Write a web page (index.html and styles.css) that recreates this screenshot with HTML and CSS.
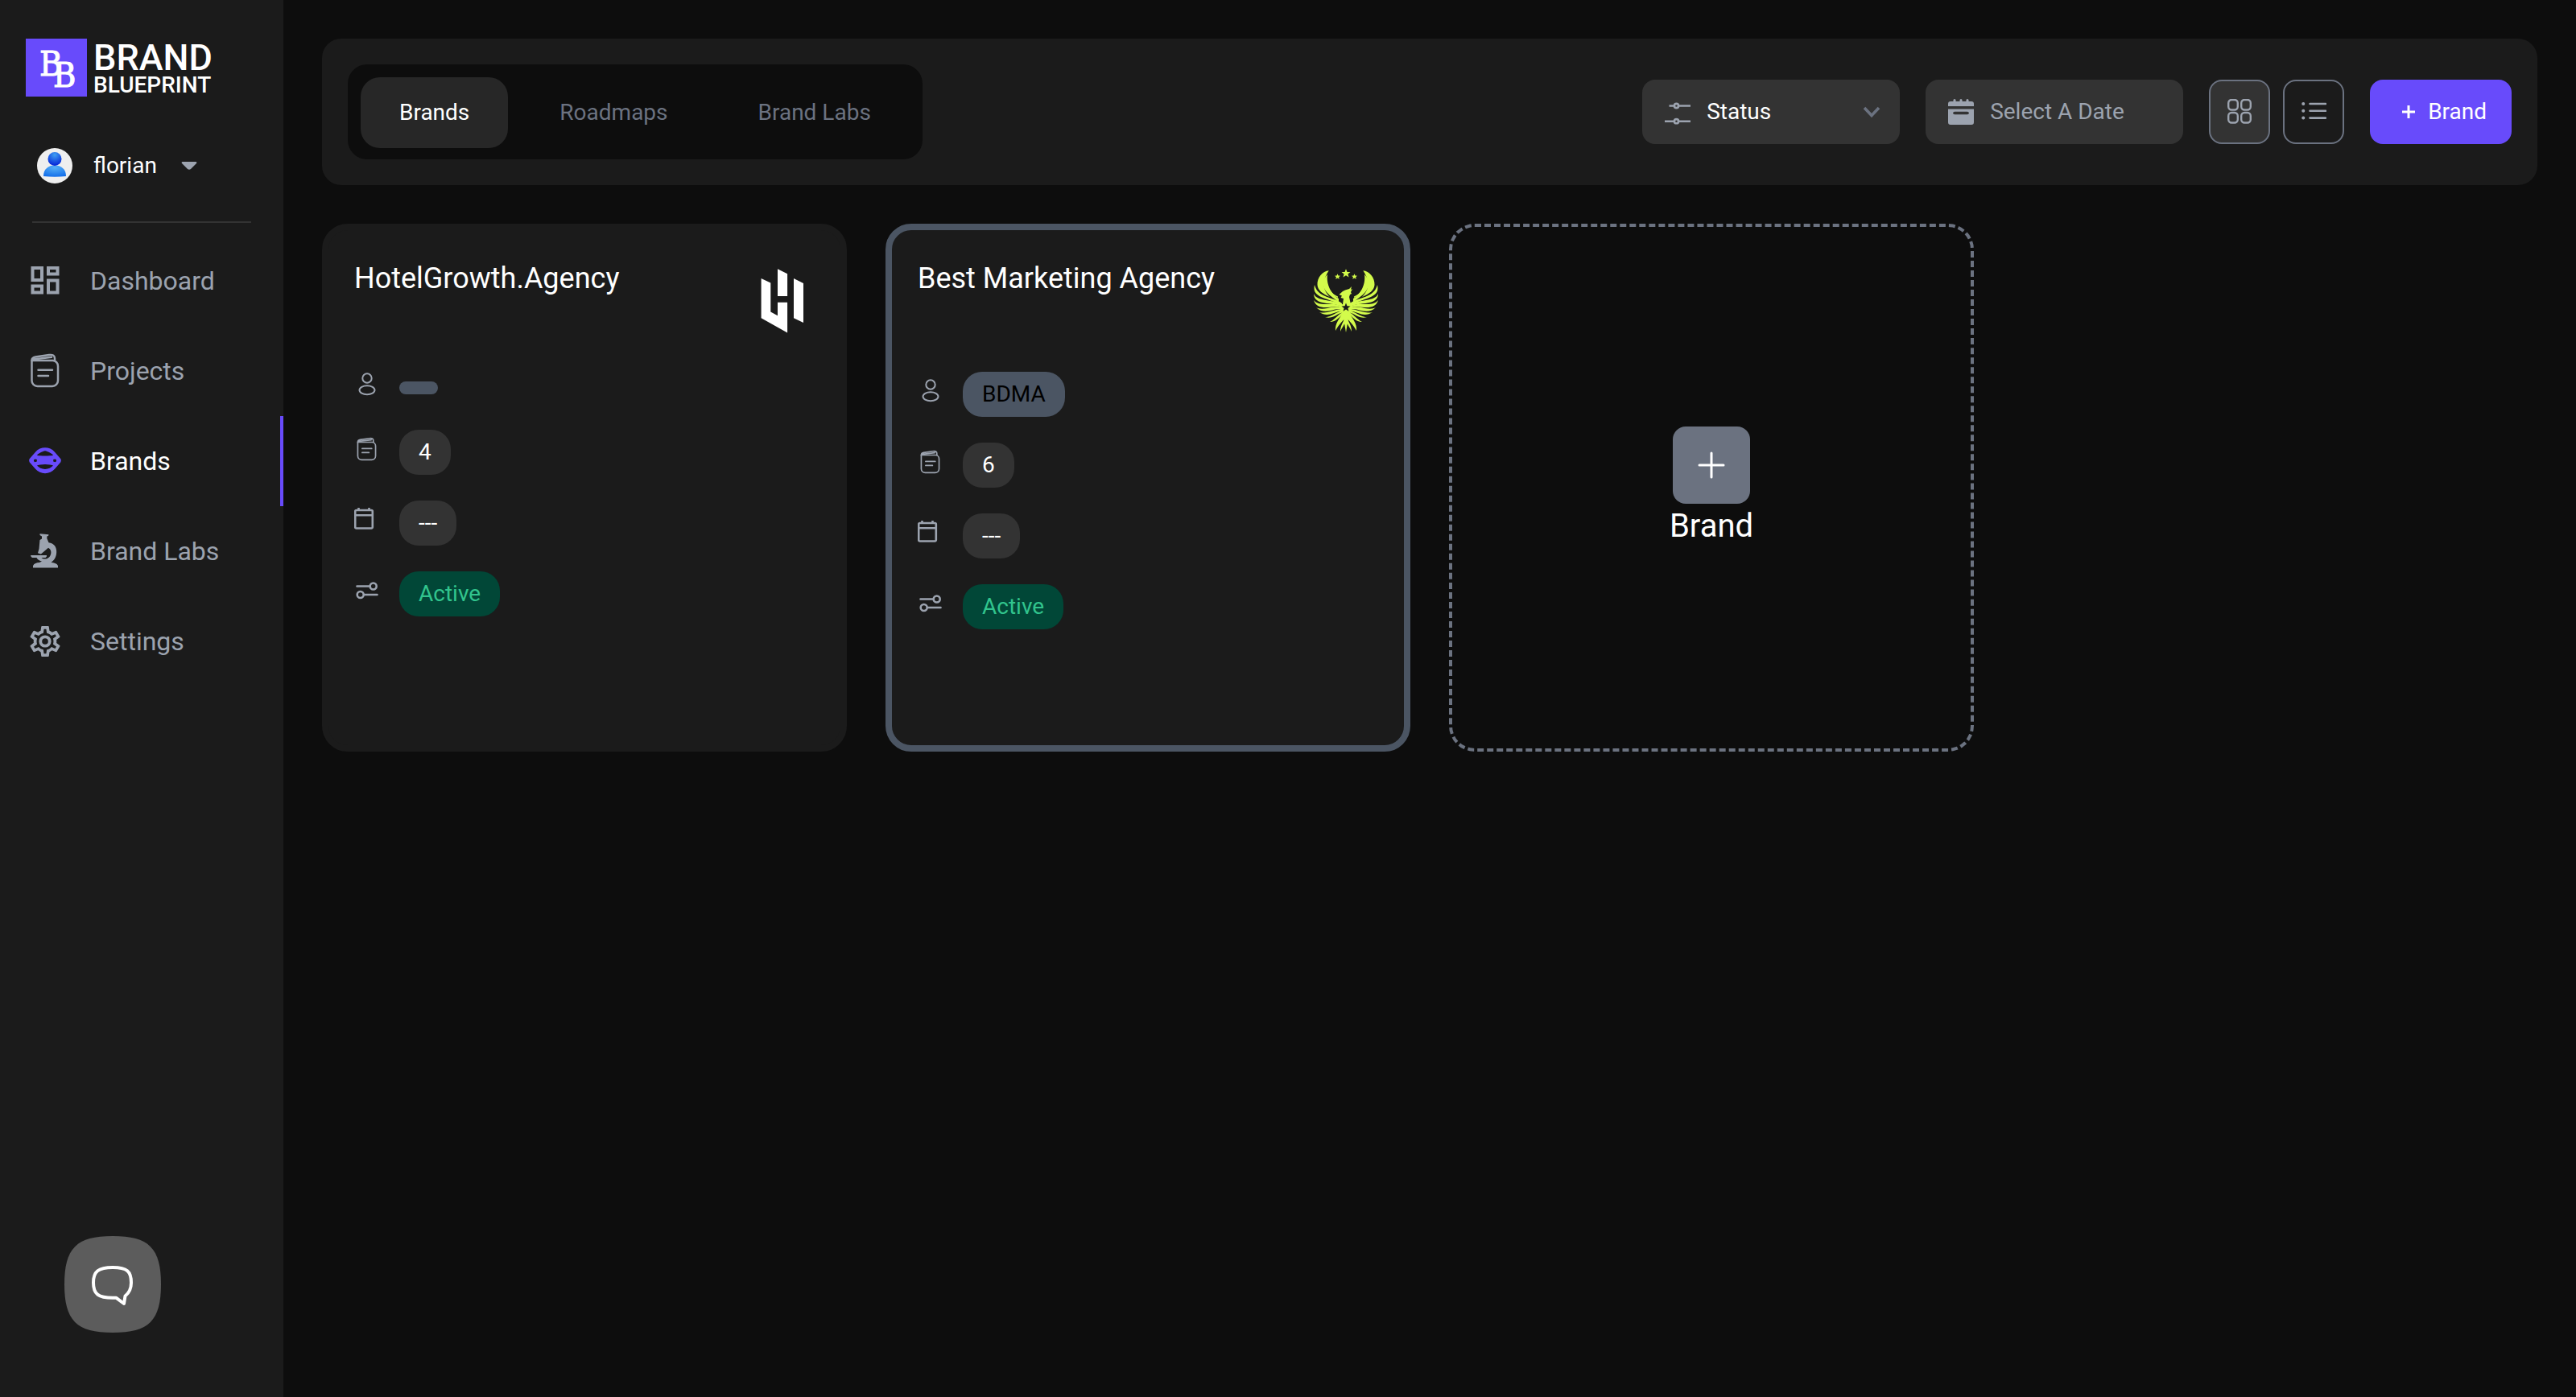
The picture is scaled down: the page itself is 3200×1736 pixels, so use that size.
FILE: index.html
```html
<!DOCTYPE html>
<html lang="en">
<head>
<meta charset="utf-8">
<title>Brands - Brand Blueprint</title>
<meta name="viewport" content="width=device-width, initial-scale=1">
<link rel="stylesheet" href="styles.css">
</head>
<body>
<svg class="sprite" aria-hidden="true">
  <symbol id="i-projects" viewBox="0 0 40 44">
    <g fill="none" stroke="currentColor" stroke-width="2.500" stroke-linecap="round" stroke-linejoin="round">
      <path d="M3.500 9H29.500a7 7 0 0 1 6.500 7V34a7 7 0 0 1-7 7H10.500a7 7 0 0 1-7-7Z"/>
      <path d="M3.500 9C3.500 6.500 5 5 8 4.500L25 2C30 1.400 32 3 32 6.500V9M6 7.500L28 4.800"/>
      <path d="M11.500 20.700H29M11.500 28H24"/>
    </g>
  </symbol>
  <symbol id="i-user" viewBox="0 0 32 32">
    <g fill="none" stroke="currentColor" stroke-width="2"><circle cx="16" cy="8" r="5.700"/><ellipse cx="16" cy="22.700" rx="9.500" ry="5.500"/></g>
  </symbol>
  <symbol id="i-calendar" viewBox="0 0 32 32">
    <path fill="none" stroke="currentColor" stroke-width="2.600" stroke-linejoin="round" d="M1.200 5.500a1.500 1.500 0 0 1 1.500-1.500H21.300a1.500 1.500 0 0 1 1.500 1.500V25a1.500 1.500 0 0 1-1.500 1.500H2.700A1.500 1.500 0 0 1 1.200 25ZM1.200 10.300H22.800M5.500 4V1M18.500 4V1"/>
  </symbol>
  <symbol id="i-toggles" viewBox="0 0 32 32">
    <g fill="none" stroke="currentColor" stroke-width="2.600" stroke-linecap="round"><path d="M3.500 10.500H19M12.500 21H28.500"/><circle cx="23.700" cy="10.500" r="4"/><circle cx="7.700" cy="21" r="4"/></g>
  </symbol>
</svg>

<div class="app">
  <aside class="sidebar">
    <a class="logo" href="#" aria-label="Brand Blueprint">
      <svg class="logo-mark" viewBox="0 0 76 72" aria-hidden="true">
        <rect width="76" height="72" fill="#684bfb"/>
        <text class="monogram" x="17" y="46">B</text>
        <text class="monogram" x="34" y="60">B</text>
      </svg>
      <span class="logo-text"><span class="logo-top">BRAND</span><span class="logo-bottom">BLUEPRINT</span></span>
    </a>
    <button class="user" type="button">
      <svg class="avatar" viewBox="0 0 44 44" aria-hidden="true">
        <defs>
          <radialGradient id="head" cx=".5" cy=".2" r=".8"><stop offset="0" stop-color="#3f9ff2"/><stop offset="1" stop-color="#0322d6"/></radialGradient>
          <radialGradient id="torso" cx=".5" cy=".2" r=".8"><stop offset="0" stop-color="#56b0f7"/><stop offset="1" stop-color="#1570ea"/></radialGradient>
        </defs>
        <circle cx="22" cy="22" r="22" fill="#efefef"/>
        <path d="M8 35C8 26 14 21.500 22 21.500S36 26 36 35Q22 36.500 8 35Z" fill="url(#torso)"/>
        <circle cx="22" cy="13.500" r="8.500" fill="url(#head)"/>
      </svg>
      <span class="user-name">florian</span>
      <svg class="caret" viewBox="0 0 20 10" aria-hidden="true"><path d="M1.500 0H18.500Q20 .5 19 2L12 9Q10 10.500 8 9L1 2Q0 .5 1.500 0Z" fill="#9ca3af"/></svg>
    </button>
    <hr class="divider">
    <nav class="nav" aria-label="Main">
      <a class="nav-item" href="#"><svg class="nav-icon" viewBox="0 -2 40 44" aria-hidden="true"><g fill="none" stroke="currentColor" stroke-width="4"><path d="M4.500 4H16V19H4.500ZM24 4H35.500V11.500H24ZM4.500 26.500H16V34.500H4.500ZM24 19.500H35.500V34.500H24Z"/></g></svg>Dashboard</a>
      <a class="nav-item" href="#"><svg class="nav-icon" aria-hidden="true"><use href="#i-projects"/></svg>Projects</a>
      <a class="nav-item nav-item-active" href="#" aria-current="page"><svg class="nav-icon" viewBox="0 -1 40 44" aria-hidden="true"><path fill="#684bfb" fill-rule="evenodd" d="M.6 18.300L8 9.800C14 2.500 26 2.500 32 9.800L39.400 18.300Q40.600 20.300 39.400 22.300L32 30.800C26 38 14 38 8 30.800L.6 22.300Q-.6 20.300 .6 18.300ZM10 13.600Q12 11 17.500 9Q20 7.400 22.500 9Q28 11 30 13.600Q29.500 14.600 26 14.200Q20 15 14 14.200Q10.500 14.600 10 13.600ZM10 26.600Q10.500 25.600 14 25.400Q20 24.600 26 25.400Q29.500 25.600 30 26.600Q26.500 30.700 20 30.900Q13.500 30.700 10 26.600ZM6 19.500L7.500 18.500L9.800 19V21.500L7.500 22.300L6 21.300ZM34 19.500L32.500 18.500L30.200 19V21.500L32.500 22.300L34 21.300Z"/></svg>Brands</a>
      <a class="nav-item" href="#"><svg class="nav-icon" viewBox="0 0 40 44" aria-hidden="true"><path fill="currentColor" d="M13.500 .3L24.500 1.300L24 3L22.500 3.300L22.300 6L24.500 11.300C31 12 34.500 17 34.200 23C34 29 31.500 33 27.500 36C31 36 34.500 37 36 40V42.500H5V40C6.500 37 9.500 36 13 36L16 34.500C12.500 33.500 10.500 32 9.500 30H4Q2.200 29 2 27H22Q22.500 29 20.500 30H15.500C18 32.500 23 32 25.500 29C28.500 25 28 20 24 17.800L15.500 25L14.500 25.500L11 24.200L12.500 19L13.500 8L16 6.500V3.500L13.500 2Z"/></svg>Brand Labs</a>
      <a class="nav-item" href="#"><svg class="nav-icon" viewBox="1.500 1.500 21 21" aria-hidden="true"><path fill="currentColor" d="M12 8A4 4 0 0 1 16 12A4 4 0 0 1 12 16A4 4 0 0 1 8 12A4 4 0 0 1 12 8M12 10A2 2 0 0 0 10 12A2 2 0 0 0 12 14A2 2 0 0 0 14 12A2 2 0 0 0 12 10M10 22C9.750 22 9.540 21.820 9.500 21.580L9.130 18.930C8.500 18.680 7.960 18.340 7.440 17.940L4.950 18.950C4.730 19.030 4.460 18.950 4.340 18.730L2.340 15.270C2.210 15.050 2.270 14.780 2.460 14.630L4.570 12.970L4.500 12L4.570 11L2.460 9.370C2.270 9.220 2.210 8.950 2.340 8.730L4.340 5.270C4.460 5.050 4.730 4.960 4.950 5.050L7.440 6.050C7.960 5.660 8.500 5.320 9.130 5.070L9.500 2.420C9.540 2.180 9.750 2 10 2H14C14.250 2 14.460 2.180 14.500 2.420L14.870 5.070C15.500 5.320 16.040 5.660 16.560 6.050L19.050 5.050C19.270 4.960 19.540 5.050 19.660 5.270L21.660 8.730C21.790 8.950 21.730 9.220 21.540 9.370L19.430 11L19.500 12L19.430 13L21.540 14.630C21.730 14.780 21.790 15.050 21.660 15.270L19.660 18.730C19.540 18.950 19.270 19.040 19.050 18.950L16.560 17.950C16.040 18.340 15.500 18.680 14.870 18.930L14.500 21.580C14.460 21.820 14.250 22 14 22H10M11.250 4L10.880 6.610C9.680 6.860 8.620 7.500 7.850 8.390L5.440 7.350L4.690 8.650L6.800 10.200C6.400 11.370 6.400 12.640 6.800 13.800L4.680 15.360L5.430 16.660L7.860 15.620C8.630 16.500 9.680 17.140 10.870 17.380L11.240 20H12.760L13.130 17.390C14.320 17.140 15.370 16.500 16.140 15.620L18.570 16.660L19.320 15.360L17.200 13.810C17.600 12.640 17.600 11.370 17.200 10.200L19.310 8.650L18.560 7.350L16.150 8.390C15.380 7.500 14.320 6.860 13.120 6.620L12.750 4H11.250Z"/></svg>Settings</a>
    </nav>
    <button class="chat" type="button" aria-label="Open chat">
      <svg viewBox="0 0 120 120" aria-hidden="true">
        <path d="M60 0C105 0 120 15 120 60S105 120 60 120S0 105 0 60S15 0 60 0Z" fill="#5c5c5c"/>
        <path d="M60 39C78 39 83 44 83 58C83 66 80.500 70.500 75.500 74.500L74 84L64.500 76.800H60C42 76.800 36 72 36 58S42 39 60 39Z" fill="none" stroke="#fff" stroke-width="4" stroke-linejoin="round"/>
      </svg>
    </button>
  </aside>

  <main class="main">
    <header class="toolbar">
      <div class="tabs" role="tablist">
        <button class="tab tab-active" type="button" role="tab" aria-selected="true">Brands</button>
        <button class="tab" type="button" role="tab" aria-selected="false">Roadmaps</button>
        <button class="tab" type="button" role="tab" aria-selected="false">Brand Labs</button>
      </div>
      <div class="controls">
        <label class="field">
          <svg class="field-icon" viewBox="0 0 32 32" aria-hidden="true"><g fill="none" stroke="#9ca3af" stroke-width="2.600"><path d="M5.500 8.500H11M18 8.500H32M0 27.700H11M18 27.700H32"/><circle cx="14.500" cy="8.500" r="2.600"/><circle cx="14.500" cy="27.700" r="2.600"/></g></svg>
          <select class="field-control" aria-label="Status"><option>Status</option></select>
          <svg class="chevron" viewBox="0 0 22 14" aria-hidden="true"><path d="M2 2L11 11.500L20 2" fill="none" stroke="#6b7280" stroke-width="3.600"/></svg>
        </label>
        <label class="field">
          <svg class="field-icon" viewBox="0 0 32 32" aria-hidden="true"><path fill="#9ca3af" fill-rule="evenodd" d="M0 6Q0 3 3 3H6.500V1Q8 -1 9.500 1V3H14.500V1Q16 -1 17.500 1V3H22.500V1Q24 -1 25.500 1V3H29Q32 3 32 6V9H0ZM0 12.500H32V29Q32 32 29 32H3Q0 32 0 29ZM8 15.800Q6 16.200 6 17.500T8 19.200H24Q26 18.800 26 17.500T24 15.800Z"/></svg>
          <input class="field-control" type="text" placeholder="Select A Date" aria-label="Select a date">
        </label>
        <div class="views">
          <button class="view view-active" type="button" aria-label="Grid view"><svg class="view-icon" viewBox="0 0 32 32" aria-hidden="true"><g fill="none" stroke="#9ca3af" stroke-width="2.400"><rect x="2.200" y="1" width="11.600" height="12.500" rx="4"/><rect x="18.200" y="1" width="11.600" height="12.500" rx="4"/><rect x="2.200" y="17" width="11.600" height="12.500" rx="4"/><rect x="18.200" y="17" width="11.600" height="12.500" rx="4"/></g></svg></button>
          <button class="view" type="button" aria-label="List view"><svg class="view-icon" viewBox="0 0 32 32" aria-hidden="true"><path d="M11.500 6H31M11.500 14.800H31M11.500 23.600H31" stroke="#9ca3af" stroke-width="2.600" stroke-linecap="round"/><path d="M3.200 6H3.300M3.200 14.800H3.300M3.200 23.600H3.300" stroke="#9ca3af" stroke-width="4" stroke-linecap="round"/></svg></button>
        </div>
        <button class="add" type="button"><svg class="add-icon" viewBox="0 0 16 16" aria-hidden="true"><path d="M8 0V16M0 8H16" stroke="#fff" stroke-width="3"/></svg>Brand</button>
      </div>
    </header>

    <section class="grid" aria-label="Brands">
      <article class="card">
        <div class="card-head">
          <h2 class="card-title">HotelGrowth.Agency</h2>
          <svg class="card-logo" viewBox="0 0 80 80" role="img" aria-label="HotelGrowth.Agency logo"><path fill="#fff" d="M13.600 12L25.300 17.600V53.500L34 58.300V41.800H46.100V79.400L13.600 61.300ZM34 .3L46.100 6.200V34H34ZM54 12L66 18V67L54 61.300Z"/></svg>
        </div>
        <ul class="facts">
          <li class="fact"><span class="fact-icon"><svg role="img" aria-label="Client"><use href="#i-user"/></svg></span><span class="pill pill-empty"></span></li>
          <li class="fact"><span class="fact-icon"><svg viewBox="-3 -2 47 47" role="img" aria-label="Projects"><use href="#i-projects" width="40" height="44"/></svg></span><span class="pill">4</span></li>
          <li class="fact"><span class="fact-icon"><svg role="img" aria-label="Due date"><use href="#i-calendar"/></svg></span><span class="pill">---</span></li>
          <li class="fact"><span class="fact-icon"><svg role="img" aria-label="Status"><use href="#i-toggles"/></svg></span><span class="pill pill-active">Active</span></li>
        </ul>
      </article>

      <article class="card card-selected">
        <div class="card-head">
          <h2 class="card-title">Best Marketing Agency</h2>
          <svg class="card-logo" viewBox="0 0 80 80" role="img" aria-label="Best Marketing Agency logo">
            <defs>
              <path id="star" d="M0 -5.500L1.500 -1.800L5.500 -1.600L2.400 .9L3.500 4.800L0 2.600L-3.500 4.800L-2.400 .9L-5.500 -1.600L-1.500 -1.800Z"/>
              <g id="wing">
                <path d="M18.700 2.300C11 3 4 11 4.500 20C5 27 11 31 20 35C12 27 9 17 18.700 2.300Z"/>
                <path d="M17 7C10 14 10 22 16 29C20 34 26 37 31 42V37C24 33 15 22 17 7Z"/>
                <path d="M16.500 16C16 25 21 32 30 36V34.500C22 31 18 25 16.500 16Z"/>
                <path d="M1 20C-1 29 3 33 14 37C22 40 30 42 35 47V43C29 38 20 37 13 33.500C6 30 3 27 1 20Z"/>
                <path d="M0 31C0 38 5 41.500 16 43C24 44 31 44 35 48V45C29 40.500 22 40.500 15 39C7 37.500 2 36 0 31Z"/>
                <path d="M0 39C2 46 8 48.500 17 48C25 47.500 31 46 35 49V47C29 43 22 44 15 44C8 44 3 43 0 39Z"/>
                <path d="M3 48C8 53 14 53.500 21 52C27 50.500 32 49 36 51L34 48C29 46.500 23 48 17 49C11 50 6 50 3 48Z"/>
                <path d="M7 54C13 58 19 57.500 25 55C29 53.500 33 52 36 53L34 50C29 50 24 52.500 19 53.500C14 54.500 10 55 7 54Z"/>
                <path d="M14 60C21 62 26 59 30 56.500C33 55 35 54.500 37 55L35 52.500C30 53 25 57 22 58C19 59.500 17 60 14 60Z"/>
                <path d="M20 66C28 66 31 60 37 56V54C31 55 28 62 20 66Z"/>
                <path d="M27 77C26 68 32 62 37 53L40 52V60C36 65 31 69 27 77Z"/>
                <path d="M33 78C33 71 36 67 40 59V64C38 70 35 73 33 78Z"/>
              </g>
            </defs>
            <g fill="#d3fb4b">
              <use href="#wing"/><use href="#wing" transform="translate(80 0) scale(-1 1)"/>
              <path d="M40 52L43 62L40 79L37 62Z"/>
              <path d="M36 44L37 37L33.500 36L35 33.500L31.500 32L36 28L39 26.500L44 25L47 22L46 26L48 25L46 29L47 31L45 32L44 35L45.500 42L48 45L46 54L40 58L34 54L32 45Z"/>
              <use href="#star" transform="translate(40 5.700)"/>
              <use href="#star" transform="translate(29.500 9.700) scale(.65)"/>
              <use href="#star" transform="translate(50.500 9.700) scale(.65)"/>
            </g>
            <use href="#star" transform="translate(40 48)" fill="#1b1b1b"/>
          </svg>
        </div>
        <ul class="facts">
          <li class="fact"><span class="fact-icon"><svg role="img" aria-label="Client"><use href="#i-user"/></svg></span><span class="pill pill-client">BDMA</span></li>
          <li class="fact"><span class="fact-icon"><svg viewBox="-3 -2 47 47" role="img" aria-label="Projects"><use href="#i-projects" width="40" height="44"/></svg></span><span class="pill">6</span></li>
          <li class="fact"><span class="fact-icon"><svg role="img" aria-label="Due date"><use href="#i-calendar"/></svg></span><span class="pill">---</span></li>
          <li class="fact"><span class="fact-icon"><svg role="img" aria-label="Status"><use href="#i-toggles"/></svg></span><span class="pill pill-active">Active</span></li>
        </ul>
      </article>

      <button class="new-brand" type="button">
        <span class="new-brand-box"><svg viewBox="0 0 34 34" aria-hidden="true"><path d="M17 2V32M2 17H32" stroke="#fff" stroke-width="3" stroke-linecap="round"/></svg></span>
        <span>Brand</span>
      </button>
    </section>
  </main>
</div>
</body>
</html>
```
FILE: styles.css
```css
*,
*::before,
*::after {
  box-sizing: border-box;
}

body {
  margin: 0;
  background: #0d0d0d;
  color: #fff;
  font-family: Roboto, "Liberation Sans", sans-serif;
  font-size: 28px;
  line-height: 40px;
}

button,
select,
input {
  margin: 0;
  padding: 0;
  border: 0;
  background: none;
  color: inherit;
  font: inherit;
}

button {
  cursor: pointer;
}

a {
  color: inherit;
  text-decoration: none;
}

svg {
  display: block;
  flex: none;
}

.sprite {
  position: absolute;
  width: 0;
  height: 0;
}

.app {
  display: flex;
  min-height: 100vh;
}

/* Sidebar */

.sidebar {
  display: flex;
  flex: none;
  flex-direction: column;
  width: 352px;
  padding-top: 48px;
  background: #1b1b1b;
}

.logo {
  display: flex;
  align-items: flex-start;
  gap: 8px;
  padding-left: 32px;
}

.logo-mark {
  width: 76px;
  height: 72px;
}

.monogram {
  fill: #fff;
  stroke: #fff;
  stroke-width: 1px;
  font-family: "DejaVu Serif Condensed", "DejaVu Serif", serif;
  font-size: 43px;
}

.logo-text {
  display: flex;
  flex-direction: column;
  padding-top: 4px;
  font-weight: 500;
}

.logo-top {
  font-size: 45px;
  line-height: 40px;
}

.logo-bottom {
  font-size: 28px;
  line-height: 28px;
}

.user {
  display: flex;
  align-items: center;
  margin-top: 64px;
  padding-left: 46px;
}

.avatar {
  width: 44px;
  height: 44px;
}

.user-name {
  margin: 0 30px 0 26px;
}

.caret {
  width: 20px;
  height: 10px;
}

.divider {
  align-self: stretch;
  height: 2px;
  margin: 47px 40px 16px;
  border: 0;
  background: #333;
}

.nav {
  display: flex;
  flex-direction: column;
}

.nav-item {
  display: flex;
  align-items: center;
  gap: 36px;
  height: 112px;
  padding-left: 36px;
  border-right: 4px solid transparent;
  color: #9ca3af;
  font-size: 32px;
}

.nav-item-active {
  border-color: #684bfb;
  color: #fff;
}

.nav-icon {
  width: 40px;
  height: 44px;
  overflow: visible;
}

.chat {
  position: fixed;
  bottom: 80px;
  left: 80px;
  width: 120px;
  height: 120px;
}

/* Toolbar */

.main {
  flex: 1;
  min-width: 0;
  padding: 48px;
}

.toolbar {
  display: flex;
  flex-wrap: wrap;
  align-items: center;
  justify-content: space-between;
  gap: 32px;
  padding: 32px;
  border-radius: 24px;
  background: #1b1b1b;
}

.tabs {
  display: flex;
  gap: 16px;
  padding: 16px 16px 14px;
  border-radius: 24px;
  background: #0d0d0d;
}

.tab {
  padding: 24px 48px;
  border-radius: 24px;
  color: #6b7280;
}

.tab-active {
  background: #272727;
  color: #fff;
}

.controls {
  display: flex;
  flex-wrap: wrap;
  align-items: center;
  gap: 32px;
}

.field {
  display: flex;
  align-items: center;
  gap: 20px;
  width: 320px;
  height: 80px;
  padding: 0 24px 0 28px;
  border-radius: 16px;
  background: #333;
}

.field-icon {
  width: 32px;
  height: 32px;
}

.field-control {
  flex: 1;
  min-width: 0;
  appearance: none;
  outline: 0;
}

.field-control::placeholder {
  color: #9ca3af;
  opacity: 1;
}

.chevron {
  width: 22px;
  height: 14px;
}

.views {
  display: flex;
  gap: 16px;
}

.view {
  display: grid;
  place-items: center;
  width: 76px;
  height: 80px;
  border: 2px solid #6b7280;
  border-radius: 16px;
}

.view-active {
  background: #333;
}

.view-icon {
  width: 32px;
  height: 32px;
}

.add {
  display: flex;
  align-items: center;
  gap: 16px;
  height: 80px;
  padding: 0 31px 0 40px;
  border-radius: 16px;
  background: #684bfb;
}

.add-icon {
  width: 16px;
  height: 16px;
}

/* Brand cards */

.grid {
  display: grid;
  grid-template-columns: repeat(4, 1fr);
  gap: 48px;
  margin-top: 48px;
}

.card {
  min-height: 656px;
  padding: 32px;
  border: 8px solid #1b1b1b;
  border-radius: 32px;
  background: #1b1b1b;
}

.card-selected {
  border-color: #4b5563;
}

.card-head {
  display: flex;
  align-items: flex-start;
  justify-content: space-between;
  gap: 24px;
}

.card-title {
  margin: 0;
  font-size: 36px;
  font-weight: 400;
  line-height: 56px;
}

.card-logo {
  width: 80px;
  height: 80px;
  margin-top: 16px;
}

.facts {
  display: flex;
  flex-direction: column;
  gap: 32px;
  margin: 48px 0 0;
  padding: 0;
  list-style: none;
}

.fact {
  display: flex;
  align-items: center;
  gap: 24px;
}

.fact-icon {
  padding-bottom: 8px;
  color: #9ca3af;
}

.fact-icon svg {
  width: 32px;
  height: 32px;
}

.pill {
  padding: 8px 24px;
  border-radius: 24px;
  background: #333;
}

.pill-empty,
.pill-client {
  background: #4b5563;
  color: #000;
}

.pill-active {
  background: #014737;
  color: #31c48d;
}

.new-brand {
  display: flex;
  flex-direction: column;
  align-items: center;
  justify-content: center;
  border: 4px dashed #6b7280;
  border-radius: 32px;
  font-size: 40px;
  line-height: 56px;
}

.new-brand-box {
  display: grid;
  place-items: center;
  width: 96px;
  height: 96px;
  border-radius: 16px;
  background: #6b7280;
}

.new-brand-box svg {
  width: 34px;
  height: 34px;
}
```
